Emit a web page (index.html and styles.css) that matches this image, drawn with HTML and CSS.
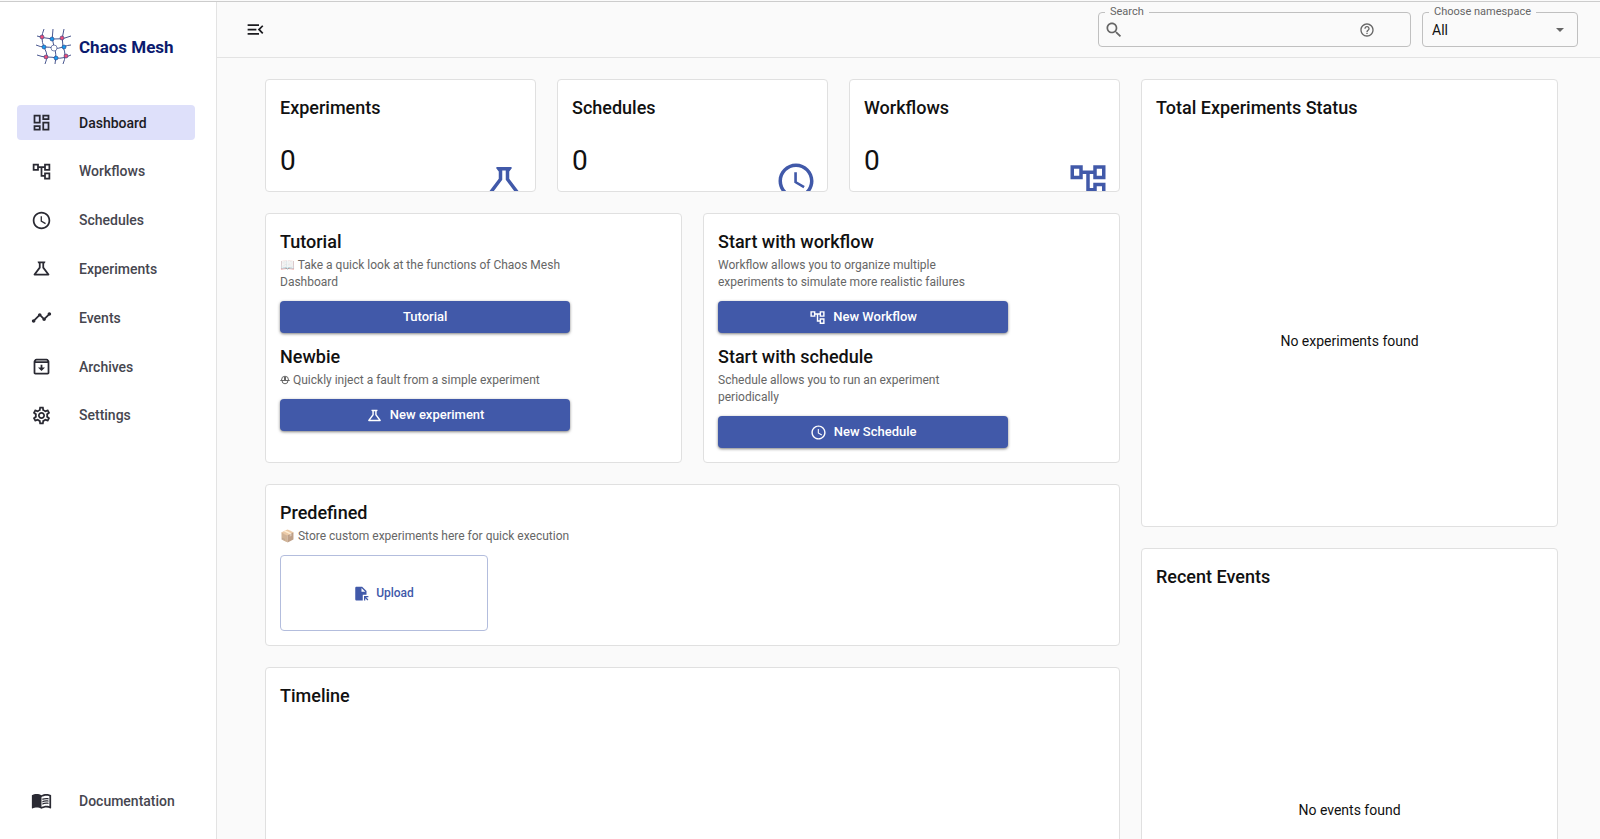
FILE: index.html
```html
<!DOCTYPE html>
<html lang="en">
	<head>
		<meta charset="utf-8">
		<title>Dashboard | Chaos Mesh</title>
		<link rel="stylesheet" href="styles.css">
	</head>
	<body>
		<svg class="sprite" aria-hidden="true">
			<symbol id="i-dashboard" viewBox="0 0 24 24"><path d="M19 5v2h-4V5h4M9 5v6H5V5h4m10 8v6h-4v-6h4M9 17v2H5v-2h4M21 3h-8v6h8V3zM11 3H3v10h8V3zm10 8h-8v10h8V11zm-10 4H3v6h8v-6z"/></symbol>
			<symbol id="i-workflow" viewBox="0 0 24 24"><path d="M22 11V3h-7v3H9V3H2v8h7V8h2v10h4v3h7v-8h-7v3h-2V8h2v3h7zM7 9H4V5h3v4zm10 6h3v4h-3v-4zm0-10h3v4h-3V5z"/></symbol>
			<symbol id="i-clock" viewBox="0 0 24 24"><path d="M11.99 2C6.47 2 2 6.48 2 12s4.47 10 9.99 10C17.52 22 22 17.52 22 12S17.52 2 11.99 2zM12 20c-4.42 0-8-3.58-8-8s3.58-8 8-8 8 3.58 8 8-3.58 8-8 8zm.5-13H11v6l5.25 3.15.75-1.23-4.5-2.67z"/></symbol>
			<symbol id="i-flask" viewBox="0 0 24 24"><path d="M13 11.33L18 18H6l5-6.67V6h2m2.96-2H8.04c-.42 0-.65.48-.39.81L9 6.5v4.17L3.2 18.4c-.49.66-.02 1.6.8 1.6h16c.82 0 1.29-.94.8-1.6L15 10.67V6.5l1.35-1.69c.26-.33.03-.81-.39-.81z"/></symbol>
			<symbol id="i-events" viewBox="0 0 24 24"><path d="M23 8c0 1.1-.9 2-2 2-.18 0-.35-.02-.51-.07l-3.56 3.55c.05.16.07.34.07.52 0 1.1-.9 2-2 2s-2-.9-2-2c0-.18.02-.36.07-.52l-2.55-2.55c-.16.05-.34.07-.52.07s-.36-.02-.52-.07l-4.55 4.56c.05.16.07.33.07.51 0 1.1-.9 2-2 2s-2-.9-2-2 .9-2 2-2c.18 0 .35.02.51.07l4.56-4.55C8.02 9.36 8 9.18 8 9c0-1.1.9-2 2-2s2 .9 2 2c0 .18-.02.36-.07.52l2.55 2.55c.16-.05.34-.07.52-.07s.36.02.52.07l3.55-3.56C19.02 8.35 19 8.18 19 8c0-1.1.9-2 2-2s2 .9 2 2z"/></symbol>
			<symbol id="i-archive" viewBox="0 0 24 24"><path d="M20.54 5.23l-1.39-1.68C18.88 3.21 18.47 3 18 3H6c-.47 0-.88.21-1.16.55L3.46 5.23C3.17 5.57 3 6.02 3 6.5V19c0 1.1.9 2 2 2h14c1.1 0 2-.9 2-2V6.5c0-.48-.17-.93-.46-1.27zM6.24 5h11.52l.83 1H5.42l.82-1zM5 19V8h14v11H5zm8-9h-2v3H8l4 4 4-4h-3v-3z"/></symbol>
			<symbol id="i-settings" viewBox="0 0 24 24"><path d="M19.43 12.98c.04-.32.07-.64.07-.98 0-.34-.03-.66-.07-.98l2.11-1.65c.19-.15.24-.42.12-.64l-2-3.46c-.09-.16-.26-.25-.44-.25-.06 0-.12.01-.17.03l-2.49 1c-.52-.4-1.08-.73-1.69-.98l-.38-2.65C14.46 2.18 14.25 2 14 2h-4c-.25 0-.46.18-.49.42l-.38 2.65c-.61.25-1.17.59-1.69.98l-2.49-1c-.06-.02-.12-.03-.18-.03-.17 0-.34.09-.43.25l-2 3.46c-.13.22-.07.49.12.64l2.11 1.65c-.04.32-.07.65-.07.98 0 .33.03.66.07.98l-2.11 1.65c-.19.15-.24.42-.12.64l2 3.46c.09.16.26.25.44.25.06 0 .12-.01.17-.03l2.49-1c.52.4 1.08.73 1.69.98l.38 2.65c.03.24.24.42.49.42h4c.25 0 .46-.18.49-.42l.38-2.65c.61-.25 1.17-.59 1.69-.98l2.49 1c.06.02.12.03.18.03.17 0 .34-.09.43-.25l2-3.46c.12-.22.07-.49-.12-.64l-2.11-1.65zm-1.98-1.71c.04.31.05.52.05.73 0 .21-.02.43-.05.73l-.14 1.13.89.7 1.08.84-.7 1.21-1.27-.51-1.04-.42-.9.68c-.43.32-.84.56-1.25.73l-1.06.43-.16 1.13-.2 1.35h-1.4l-.19-1.35-.16-1.13-1.06-.43c-.43-.18-.83-.41-1.23-.71l-.91-.7-1.06.43-1.27.51-.7-1.21 1.08-.84.89-.7-.14-1.13c-.03-.31-.05-.54-.05-.74s.02-.43.05-.73l.14-1.13-.89-.7-1.08-.84.7-1.21 1.27.51 1.04.42.9-.68c.43-.32.84-.56 1.25-.73l1.06-.43.16-1.13.2-1.35h1.39l.19 1.35.16 1.13 1.06.43c.43.18.83.41 1.23.71l.91.7 1.06-.43 1.27-.51.7 1.21-1.07.85-.89.7.14 1.13zM12 8c-2.21 0-4 1.79-4 4s1.79 4 4 4 4-1.79 4-4-1.79-4-4-4zm0 6c-1.1 0-2-.9-2-2s.9-2 2-2 2 .9 2 2-.9 2-2 2z"/></symbol>
			<symbol id="i-book" viewBox="0 0 24 24"><path d="M17.5 4.5c-1.95 0-4.05.4-5.5 1.5-1.45-1.1-3.55-1.5-5.5-1.5S2.45 4.9 1 6v14.65c0 .25.25.5.5.5.1 0 .15-.05.25-.05C3.1 20.45 5.05 20 6.5 20c1.95 0 4.05.4 5.5 1.5 1.35-.85 3.8-1.5 5.5-1.5 1.65 0 3.35.3 4.75 1.05.1.05.15.05.25.05.25 0 .5-.25.5-.5V6c-.6-.45-1.25-.75-2-1-1.1-.35-2.35-.5-3.5-.5zM21 18.5c-1.1-.35-2.3-.5-3.5-.5-1.7 0-4.15.65-5.5 1.5V8c1.35-.85 3.8-1.5 5.5-1.5 1.2 0 2.4.15 3.5.5v11.5z"/><path d="M17.5 10.5c.88 0 1.73.09 2.5.26V9.24c-.79-.15-1.64-.24-2.5-.24-1.7 0-3.24.29-4.5.83v1.66c1.13-.64 2.7-.99 4.5-.99zM13 12.49v1.66c1.13-.64 2.7-.99 4.5-.99.88 0 1.73.09 2.5.26V11.9c-.79-.15-1.64-.24-2.5-.24-1.7 0-3.24.3-4.5.83zm4.5 1.84c-1.7 0-3.24.29-4.5.83v1.66c1.13-.64 2.7-.99 4.5-.99.88 0 1.73.09 2.5.26v-1.52c-.79-.16-1.64-.24-2.5-.24z"/></symbol>
			<symbol id="i-menu" viewBox="0 0 24 24"><path d="M3 18h13v-2H3v2zM3 13h10v-2H3v2zm0-7v2h13V6H3zm18 9.59L17.42 12 21 8.41 19.59 7l-5 5 5 5L21 15.59z"/></symbol>
			<symbol id="i-search" viewBox="0 0 24 24"><path d="M15.5 14h-.79l-.28-.27C15.41 12.59 16 11.11 16 9.5 16 5.91 13.09 3 9.5 3S3 5.91 3 9.5 5.91 16 9.5 16c1.61 0 3.09-.59 4.23-1.57l.27.28v.79l5 4.99L20.49 19l-4.99-5zm-6 0C7.01 14 5 11.99 5 9.5S7.01 5 9.5 5 14 7.01 14 9.5 11.99 14 9.5 14z"/></symbol>
			<symbol id="i-help" viewBox="0 0 24 24"><path d="M11 18h2v-2h-2v2zm1-16C6.48 2 2 6.48 2 12s4.48 10 10 10 10-4.48 10-10S17.52 2 12 2zm0 18c-4.41 0-8-3.59-8-8s3.59-8 8-8 8 3.59 8 8-3.59 8-8 8zm0-14c-2.21 0-4 1.79-4 4h2c0-1.1.9-2 2-2s2 .9 2 2c0 2-3 1.75-3 5h2c0-2.25 3-2.5 3-5 0-2.21-1.79-4-4-4z"/></symbol>
			<symbol id="i-upload" viewBox="0 0 24 24"><path fill-rule="evenodd" d="M13 1H4C2.900 1 2 1.900 2 3v18c0 1.100.9 2 2 2h10v-9h6V8l-7-7zm-1 8V3l6 6h-6z"/><path d="M16 16h7v2h-3.600l3.600 3.600-1.400 1.400-3.600-3.600V23h-2z"/></symbol>
			<symbol id="i-helmet" viewBox="0 0 10 10"><path d="M1.500 5a3.500 3.800 0 0 1 7 0M.3 5.500h9.400M2 5.500a3 3.300 0 0 0 6 0" fill="none" stroke="currentColor"/><path d="M4 2h2v3H4z"/></symbol>
		</svg>

		<div class="app">
			<aside class="sidebar">
				<a class="brand" href="#">
					<svg class="logo" viewBox="0 0 36 36">
						<g class="logo-lines">
							<path d="M1 7q6 2 16 3t18-3"/>
							<path d="M0 16q4 2 9 2t9 1 9-1 8-2"/>
							<path d="M1 26q5 2 10 2t10 1 14-3"/>
							<path d="M8 0Q4 9 8 18q3 6 3 9t-2 8"/>
							<path d="M17 0q-2 9 1 18 3 6 1 17"/>
							<path d="M28 0q-3 9-1 18 4 8 0 17"/>
						</g>
						<g class="logo-red">
							<circle cx="6" cy="8" r="2"/><circle cx="26" cy="9" r="2"/><circle cx="10" cy="28" r="2"/><circle cx="30" cy="27" r="2"/>
						</g>
						<g class="logo-blue">
							<circle cx="16" cy="10" r="2"/><circle cx="8" cy="18" r="2"/><circle cx="28" cy="18" r="2"/><circle cx="20" cy="29" r="2"/>
						</g>
						<circle class="logo-core" cx="18" cy="19" r="3"/>
					</svg>
					<span>Chaos Mesh</span>
				</a>
				<nav class="nav nav-main">
					<a class="nav-item active" href="#"><svg><use href="#i-dashboard"/></svg>Dashboard</a>
					<a class="nav-item" href="#"><svg><use href="#i-workflow"/></svg>Workflows</a>
					<a class="nav-item" href="#"><svg><use href="#i-clock"/></svg>Schedules</a>
					<a class="nav-item" href="#"><svg><use href="#i-flask"/></svg>Experiments</a>
					<a class="nav-item" href="#"><svg><use href="#i-events"/></svg>Events</a>
					<a class="nav-item" href="#"><svg><use href="#i-archive"/></svg>Archives</a>
					<a class="nav-item" href="#"><svg><use href="#i-settings"/></svg>Settings</a>
				</nav>
				<nav class="nav nav-bottom">
					<a class="nav-item" href="#"><svg><use href="#i-book"/></svg>Documentation</a>
				</nav>
			</aside>

			<div class="page">
				<header class="topbar">
					<button class="menu-btn" type="button" aria-label="Toggle sidebar"><svg><use href="#i-menu"/></svg></button>
					<div class="field search">
						<label for="search">Search</label>
						<svg><use href="#i-search"/></svg>
						<input id="search" type="text">
						<svg class="help"><use href="#i-help"/></svg>
					</div>
					<div class="field namespace">
						<label for="namespace">Choose namespace</label>
						<select id="namespace">
							<option>All</option>
						</select>
					</div>
				</header>

				<main class="content">
					<div class="column">
						<div class="totals">
							<section class="card total">
								<h2>Experiments</h2>
								<div class="count">0</div>
								<svg><use href="#i-flask"/></svg>
							</section>
							<section class="card total">
								<h2>Schedules</h2>
								<div class="count">0</div>
								<svg><use href="#i-clock"/></svg>
							</section>
							<section class="card total">
								<h2>Workflows</h2>
								<div class="count">0</div>
								<svg><use href="#i-workflow"/></svg>
							</section>
						</div>

						<div class="starters">
							<section class="card">
								<div class="starter">
									<h2>Tutorial</h2>
									<p><span class="emoji">📖</span> Take a quick look at the functions of Chaos Mesh Dashboard</p>
									<button class="btn" type="button">Tutorial</button>
								</div>
								<div class="starter">
									<h2>Newbie</h2>
									<p><svg class="helmet"><use href="#i-helmet"/></svg> Quickly inject a fault from a simple experiment</p>
									<button class="btn" type="button"><svg><use href="#i-flask"/></svg>New experiment</button>
								</div>
							</section>
							<section class="card">
								<div class="starter">
									<h2>Start with workflow</h2>
									<p>Workflow allows you to organize multiple experiments to simulate more realistic failures</p>
									<button class="btn" type="button"><svg><use href="#i-workflow"/></svg>New Workflow</button>
								</div>
								<div class="starter">
									<h2>Start with schedule</h2>
									<p>Schedule allows you to run an experiment periodically</p>
									<button class="btn" type="button"><svg><use href="#i-clock"/></svg>New Schedule</button>
								</div>
							</section>
						</div>

						<section class="card">
							<h2>Predefined</h2>
							<p><span class="emoji">📦</span> Store custom experiments here for quick execution</p>
							<button class="upload" type="button"><svg><use href="#i-upload"/></svg>Upload</button>
						</section>

						<section class="card timeline">
							<h2>Timeline</h2>
						</section>
					</div>

					<div class="column">
						<section class="card status">
							<h2>Total Experiments Status</h2>
							<div class="empty">No experiments found</div>
						</section>
						<section class="card status">
							<h2>Recent Events</h2>
							<div class="empty">No events found</div>
						</section>
					</div>
				</main>
			</div>
		</div>
	</body>
</html>
```
FILE: styles.css
```css
* {
	box-sizing: border-box;
}
body {
	margin: 0;
	background: #fafafa;
	color: #111;
	font-family: Roboto, "Liberation Sans", sans-serif;
	font-size: 14px;
	line-height: 20px;
}
h2, p {
	margin: 0;
}
a {
	color: inherit;
	text-decoration: none;
}
svg {
	flex: none;
	fill: currentColor;
}
button, input, select {
	font: inherit;
}
.sprite {
	display: none;
}
.app {
	display: flex;
	height: 100vh;
	overflow: hidden;
	border-top: 1px solid #fafafa;
	box-shadow: inset 0 1px #ccc;
}

/* sidebar */
.sidebar {
	display: flex;
	flex-direction: column;
	width: 217px;
	flex: none;
	margin-top: 1px;
	padding-bottom: 21px;
	background: #fff;
	border-right: 1px solid #e3e3e3;
}
.brand {
	display: flex;
	align-items: center;
	gap: 7px;
	padding: 27px 0 0 36px;
	color: #0b1a6e;
	font-size: 17px;
	font-weight: 700;
}
.logo {
	width: 36px;
	height: 36px;
}
.logo-lines {
	fill: none;
	stroke: #4a5890;
}
.logo-red {
	fill: #f0507a;
	stroke: #2b3b80;
	stroke-width: 0.6;
}
.logo-blue {
	fill: #189cf0;
	stroke: #2b3b80;
	stroke-width: 0.6;
}
.logo-core {
	fill: #fff;
	stroke: #2b3b80;
	stroke-width: 0.6;
}
.nav {
	display: flex;
	flex-direction: column;
	padding: 0 21px 0 17px;
}
.nav-main {
	justify-content: space-between;
	height: 328px;
	margin-top: 40px;
}
.nav-bottom {
	margin-top: auto;
}
.nav-item {
	display: flex;
	align-items: center;
	gap: 27px;
	height: 35px;
	padding-left: 14px;
	border-radius: 4px;
	color: #46464f;
	font-weight: 500;
}
.nav-item svg {
	width: 21px;
	height: 21px;
	color: #2a2a33;
}
.nav-item.active {
	background: #dee0fa;
	color: #1b1b23;
}

/* top bar */
.page {
	display: flex;
	flex-direction: column;
	flex: 1;
	min-width: 0;
}
.topbar {
	display: flex;
	align-items: center;
	gap: 11px;
	height: 57px;
	flex: none;
	padding: 1px 22px 0 28px;
	border-bottom: 1px solid #e3e3e3;
}
.menu-btn {
	display: flex;
	margin-right: auto;
	padding: 0;
	border: 0;
	background: none;
	color: #1b1b1f;
}
.menu-btn svg {
	width: 21px;
	height: 21px;
}
.field {
	position: relative;
	display: flex;
	align-items: center;
	height: 35px;
	border: 1px solid #c0c0c0;
	border-radius: 4px;
	color: #666;
}
.field label {
	position: absolute;
	top: -9px;
	left: 6px;
	padding: 0 5px;
	background: #fafafa;
	font-size: 11px;
	line-height: 16px;
}
.search {
	width: 313px;
	padding: 0 35px 0 5px;
}
.search svg {
	width: 20px;
	height: 20px;
}
.search input {
	flex: 1;
	min-width: 0;
	border: 0;
	outline: 0;
	background: none;
}
.search .help {
	width: 16px;
	height: 16px;
}
.namespace {
	width: 156px;
}
.namespace select {
	width: 100%;
	height: 100%;
	padding: 0 9px;
	border: 0;
	outline: 0;
	appearance: none;
	background: none;
	color: #111;
}
.namespace::after {
	content: "";
	position: absolute;
	right: 13px;
	border: 4px solid transparent;
	border-top-color: #666;
	border-bottom: 0;
	pointer-events: none;
}

/* cards */
.content {
	display: grid;
	grid-template-columns: 855fr 417fr;
	gap: 21px;
	padding: 21px 42px 21px 48px;
}
.column {
	display: flex;
	flex-direction: column;
	gap: 21px;
	min-width: 0;
}
.card {
	padding: 14px;
	background: #fff;
	border: 1px solid #e0e0e0;
	border-radius: 4px;
}
.card h2 {
	font-size: 18px;
	font-weight: 500;
	line-height: 27px;
}
.card p {
	margin-top: 2px;
	padding-right: 8px;
	color: #666;
	font-size: 12px;
	line-height: 17px;
}
.emoji {
	opacity: 0.6;
}
.helmet {
	width: 10px;
	height: 10px;
	vertical-align: -1px;
}
.totals {
	display: grid;
	grid-template-columns: repeat(3, 1fr);
	gap: 21px;
}
.total {
	position: relative;
	height: 113px;
	overflow: hidden;
}
.count {
	margin-top: 20px;
	font-size: 28px;
	line-height: 40px;
}
.total svg {
	position: absolute;
	right: 10px;
	bottom: -11px;
	width: 42px;
	height: 42px;
	color: #4159a9;
}
.starters {
	display: grid;
	grid-template-columns: 1fr 1fr;
	gap: 21px;
}
.starter {
	width: 75%;
}
.starter + .starter {
	margin-top: 10px;
}
.btn {
	display: flex;
	align-items: center;
	justify-content: center;
	gap: 7px;
	width: 100%;
	height: 32px;
	margin-top: 10px;
	border: 0;
	border-radius: 4px;
	background: #4159a9;
	box-shadow: 0 1px 3px rgba(0, 0, 0, 0.5);
	color: #fff;
	font-size: 13px;
	font-weight: 500;
}
.btn svg {
	width: 17px;
	height: 17px;
}
.upload {
	display: flex;
	align-items: center;
	justify-content: center;
	gap: 7px;
	width: 208px;
	height: 76px;
	margin-top: 10px;
	border: 1px solid #b3bddd;
	border-radius: 4px;
	background: none;
	color: #4159a9;
	font-size: 12px;
	font-weight: 500;
}
.upload svg {
	width: 15px;
	height: 15px;
}
.timeline {
	height: 420px;
}
.status {
	display: flex;
	flex-direction: column;
	height: 448px;
}
.empty {
	display: flex;
	align-items: center;
	justify-content: center;
	flex: 1;
	padding-top: 48px;
}
```
